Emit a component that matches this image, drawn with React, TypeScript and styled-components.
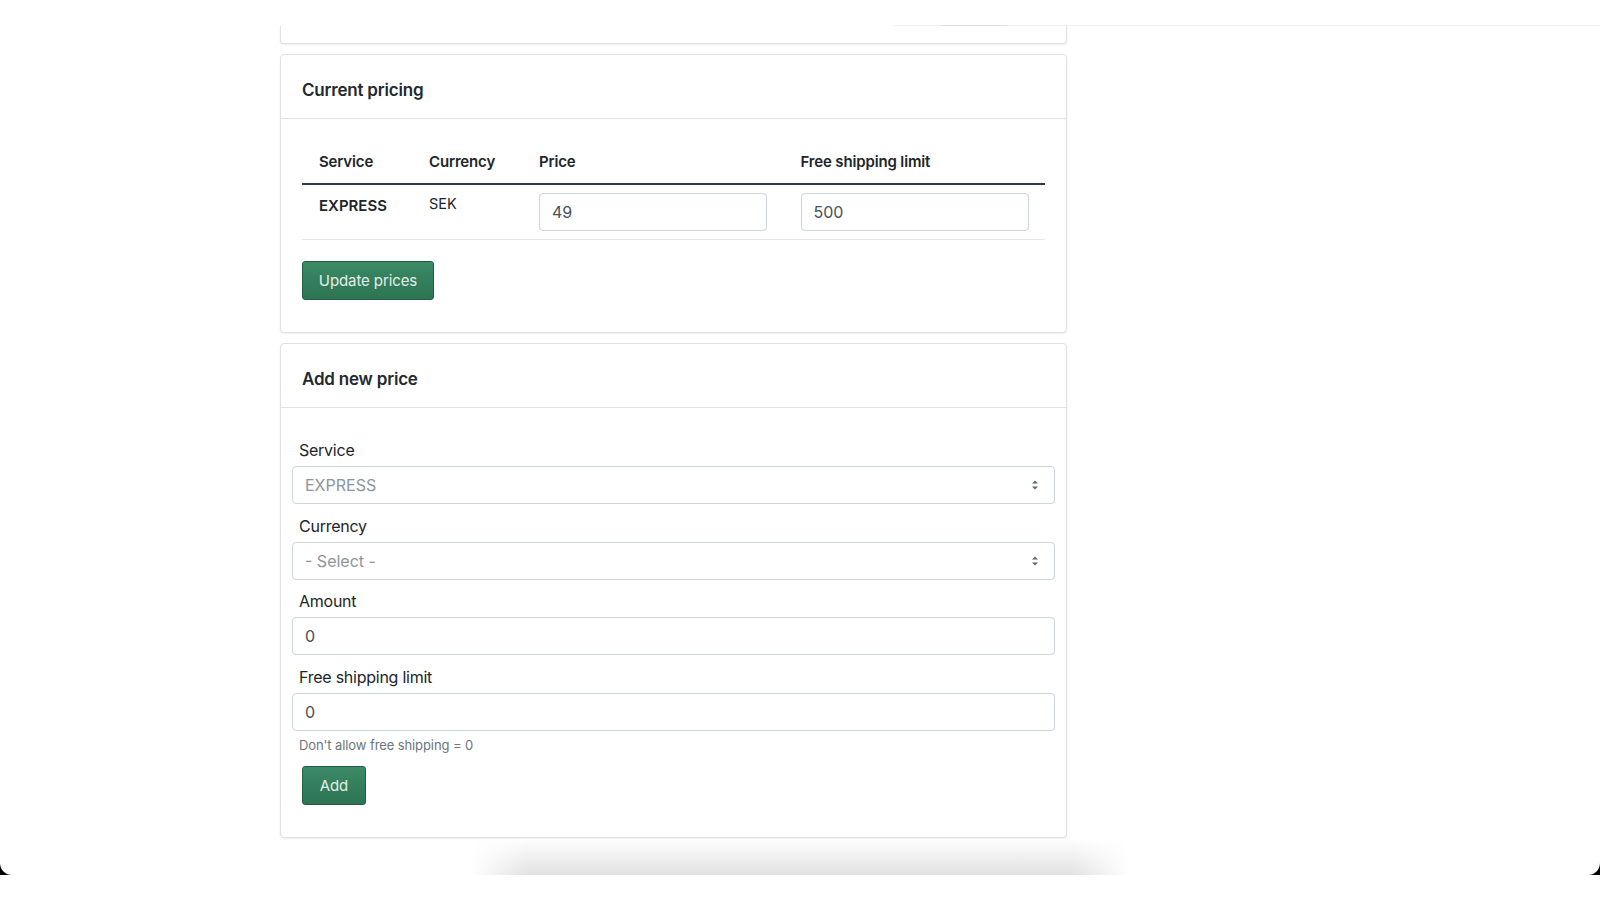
import React from 'react';
import styled, { createGlobalStyle } from 'styled-components';

const Global = createGlobalStyle`
  html, body { margin: 0; padding: 0; background: #fff; }
  body {
    font-family: Inter, "Noto Sans", "Liberation Sans", sans-serif;
    color: #212529;
    -webkit-font-smoothing: antialiased;
  }
  * { box-sizing: border-box; }
`;

const Screen = styled.div`
  width: 1600px;
  height: 900px;
  background: #fff;
  overflow: hidden;
`;

const Backdrop = styled.div`
  height: 875px;
  background: #000;
`;

const Window = styled.div`
  height: 100%;
  background: #fff;
  border-radius: 0 0 12px 12px;
  overflow: hidden;
  display: flex;
  flex-direction: column;
`;

const TopBar = styled.div`
  height: 26px;
  flex-shrink: 0;
  display: flex;
`;

const TopBarEdge = styled.div`
  margin-left: 894px;
  flex: 1;
  border-bottom: 1px solid #f1f1f1;
  display: flex;
  align-items: flex-end;
`;

const TopBarMark = styled.span`
  margin-left: 47px;
  margin-bottom: -1px;
  width: 66px;
  height: 1px;
  background: #dedede;
`;

const Column = styled.main`
  margin-left: 280px;
  width: 787px;
  display: flex;
  flex-direction: column;
  gap: 10px;
`;

const StubCard = styled.div`
  height: 18px;
  border: 1px solid #e1e1e1;
  border-top: none;
  border-radius: 0 0 4px 4px;
  box-shadow: 0 1px 2px rgba(0, 0, 0, 0.08);
  background: #fff;
`;

const Card = styled.section`
  border: 1px solid #e1e1e1;
  border-radius: 4px;
  box-shadow: 0 1px 2px rgba(0, 0, 0, 0.08);
  background: #fff;
`;

const CardHeader = styled.header`
  padding: 23px 20px 16px 21px;
  border-bottom: 1px solid #e3e3e3;
`;

const CardTitle = styled.h2`
  margin: 0;
  font-size: 17px;
  line-height: 24px;
  font-weight: 600;
  color: #24292e;
  letter-spacing: -0.2px;
`;

const CardBody = styled.div<{ $top: number; $side: number }>`
  padding: ${p => p.$top}px ${p => p.$side}px 32px;
`;

const Table = styled.table`
  width: 100%;
  border-collapse: collapse;
  table-layout: fixed;
`;

const Th = styled.th<{ $w?: number }>`
  width: ${p => (p.$w ? `${p.$w}px` : 'auto')};
  text-align: left;
  font-size: 15px;
  font-weight: 600;
  line-height: 24px;
  padding: 11px 17px 9px;
  border-bottom: 2px solid #343a40;
  color: #212529;
  letter-spacing: -0.15px;
`;

const Td = styled.td<{ $strong?: boolean }>`
  vertical-align: top;
  padding: 8px 17px;
  line-height: 24px;
  font-size: ${p => (p.$strong ? '15px' : '14.5px')};
  font-weight: ${p => (p.$strong ? 600 : 400)};
  border-bottom: 1px solid #e3e6ea;
  color: #212529;
`;

const CellText = styled.span<{ $shift?: number }>`
  display: block;
  margin-top: ${p => p.$shift ?? 0}px;
`;

const TextInput = styled.input<{ $w?: number }>`
  display: block;
  width: ${p => (p.$w ? `${p.$w}px` : '100%')};
  height: 38px;
  padding: 0 12px;
  border: 1px solid #ced4da;
  border-radius: 4px;
  font-family: inherit;
  font-size: 16px;
  color: #495057;
  background: #fff;
  outline: none;
`;

const GreenButton = styled.button<{ $w: number; $ml?: number }>`
  display: block;
  width: ${p => p.$w}px;
  height: 39px;
  margin-left: ${p => p.$ml ?? 0}px;
  padding: 0;
  border: 1px solid #235c42;
  border-radius: 3px;
  background: linear-gradient(#3b8a66, #2d7453);
  color: #e3eee8;
  font-family: inherit;
  font-size: 15px;
  font-weight: 400;
  letter-spacing: -0.1px;
  cursor: pointer;
`;

const ButtonRow = styled.div<{ $mt: number }>`
  margin-top: ${p => p.$mt}px;
`;

const Field = styled.div`
  margin-bottom: 9.5px;
`;

const Label = styled.label`
  display: block;
  padding-left: 7px;
  margin-bottom: 4px;
  font-size: 16px;
  line-height: 24px;
  color: #212529;
  letter-spacing: -0.25px;
`;

const SelectBox = styled.div`
  height: 38px;
  padding: 0 15px 0 12px;
  display: flex;
  align-items: center;
  justify-content: space-between;
  border: 1px solid #ced4da;
  border-radius: 4px;
  font-size: 16px;
  color: #8d949b;
  background: #fff;
`;

const Help = styled.p`
  margin: -4.5px 0 0;
  padding-left: 7px;
  font-size: 13px;
  line-height: 18px;
  color: #6c757d;
  letter-spacing: -0.1px;
`;

const BottomShade = styled.div`
  margin-top: auto;
  margin-left: 470px;
  width: 660px;
  height: 36px;
  flex-shrink: 0;
  background: linear-gradient(#fefefe, #e1e1e1);
  -webkit-mask-image: linear-gradient(to right, transparent, #000 9%, #000 91%, transparent);
  mask-image: linear-gradient(to right, transparent, #000 9%, #000 91%, transparent);
`;

const Arrows = () => (
  <svg width="8" height="12" viewBox="0 0 8 12" aria-hidden="true">
    <path d="M4 1.5 L7 4.5 H1 Z" fill="#5f666d" />
    <path d="M4 10.5 L7 7.5 H1 Z" fill="#5f666d" />
  </svg>
);

export default function App() {
  return (
    <Screen>
      <Global />
      <Backdrop>
        <Window>
          <TopBar>
            <TopBarEdge>
              <TopBarMark />
            </TopBarEdge>
          </TopBar>
          <Column>
            <StubCard />
            <Card>
              <CardHeader>
                <CardTitle>Current pricing</CardTitle>
              </CardHeader>
              <CardBody $top={20} $side={21}>
                <Table>
                  <thead>
                    <tr>
                      <Th $w={110}>Service</Th>
                      <Th $w={110}>Currency</Th>
                      <Th>Price</Th>
                      <Th>Free shipping limit</Th>
                    </tr>
                  </thead>
                  <tbody>
                    <tr>
                      <Td $strong>
                        <CellText $shift={1}>EXPRESS</CellText>
                      </Td>
                      <Td>
                        <CellText $shift={-1}>SEK</CellText>
                      </Td>
                      <Td>
                        <TextInput $w={228} defaultValue="49" />
                      </Td>
                      <Td>
                        <TextInput $w={228} defaultValue="500" />
                      </Td>
                    </tr>
                  </tbody>
                </Table>
                <ButtonRow $mt={21}>
                  <GreenButton $w={132}>Update prices</GreenButton>
                </ButtonRow>
              </CardBody>
            </Card>
            <Card>
              <CardHeader>
                <CardTitle>Add new price</CardTitle>
              </CardHeader>
              <CardBody $top={30} $side={11}>
                <Field>
                  <Label>Service</Label>
                  <SelectBox>
                    <span>EXPRESS</span>
                    <Arrows />
                  </SelectBox>
                </Field>
                <Field>
                  <Label>Currency</Label>
                  <SelectBox>
                    <span>- Select -</span>
                    <Arrows />
                  </SelectBox>
                </Field>
                <Field>
                  <Label>Amount</Label>
                  <TextInput defaultValue="0" />
                </Field>
                <Field>
                  <Label>Free shipping limit</Label>
                  <TextInput defaultValue="0" />
                </Field>
                <Help>Don't allow free shipping = 0</Help>
                <ButtonRow $mt={12.5}>
                  <GreenButton $w={64} $ml={10}>Add</GreenButton>
                </ButtonRow>
              </CardBody>
            </Card>
          </Column>
          <BottomShade />
        </Window>
      </Backdrop>
    </Screen>
  );
}
